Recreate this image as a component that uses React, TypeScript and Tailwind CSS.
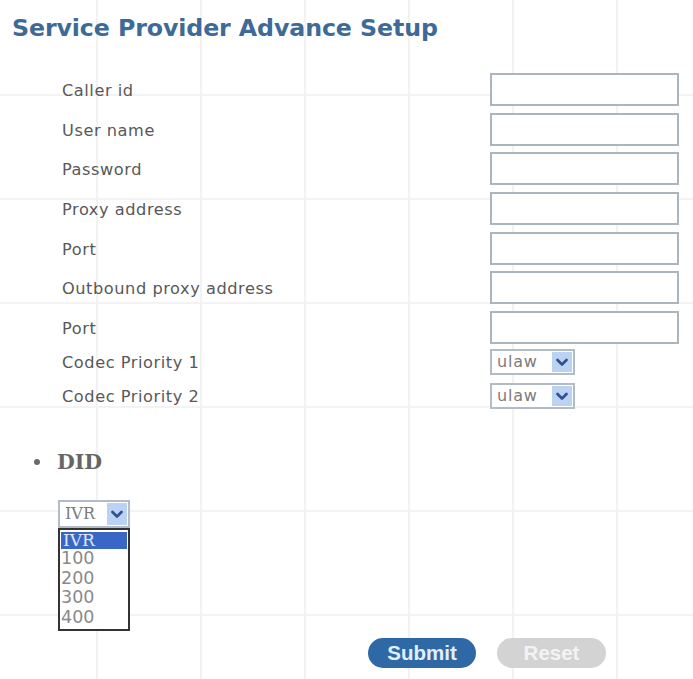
import React from "react";

const textRows = [
  "Caller id",
  "User name",
  "Password",
  "Proxy address",
  "Port",
  "Outbound proxy address",
  "Port",
];

const codecRows = ["Codec Priority 1", "Codec Priority 2"];

function Chevron() {
  return (
    <svg width="12" height="9" viewBox="0 0 12 9" aria-hidden="true">
      <path d="M1.5 2 L6 6.5 L10.5 2" fill="none" stroke="#2f4f8f" strokeWidth="2.6" strokeLinecap="round" strokeLinejoin="round" />
    </svg>
  );
}

function ComboBox({ value, className, textClass }: { value: string; className: string; textClass: string }) {
  return (
    <div className={`flex items-stretch border-2 border-[#b3bcc6] bg-white ${className}`}>
      <span className={`flex-1 flex items-center pl-[5px] text-[#7c7c7c] ${textClass}`}>{value}</span>
      <span className="w-[20px] my-[1px] mr-[1px] bg-[#bcd2f2] flex items-center justify-center">
        <Chevron />
      </span>
    </div>
  );
}

export default function App() {
  return (
    <div
      className="relative w-[693px] h-[679px] overflow-hidden bg-white bg-[linear-gradient(to_right,#f2f2f2_2px,transparent_2px),linear-gradient(to_bottom,#f3f3f3_2px,transparent_2px)] bg-[size:104px_104px] bg-[position:96px_94px]"
      style={{ fontFamily: '"DejaVu Sans", Verdana, sans-serif' }}
    >
      <h1 className="pl-[12px] pt-[13px] text-[23.7px] leading-[30px] font-bold text-[#3e6a98] tracking-[-0.1px]">
        Service Provider Advance Setup
      </h1>

      {/* text fields */}
      <div className="mt-[30px] flex flex-col gap-[6.7px]">
        {textRows.map((label, i) => (
          <div key={i} className="flex items-center h-[33px]">
            <span className="w-[490px] pl-[62px] pt-[3px] text-[16.2px] tracking-[0.55px] text-[#585858]">{label}</span>
            <div className="w-[189px] h-[33px] border-2 border-[#aab5c0] bg-white" />
          </div>
        ))}
      </div>

      {/* codec selects */}
      <div className="mt-[5px] flex flex-col gap-[8px]">
        {codecRows.map((label, i) => (
          <div key={i} className="flex items-center h-[26px]">
            <span className="w-[490px] pl-[62px] pt-[3px] text-[16.2px] tracking-[0.55px] text-[#585858]">{label}</span>
            <ComboBox value="ulaw" className="w-[85px] h-[26px]" textClass="text-[16px] tracking-[0.8px]" />
          </div>
        ))}
      </div>

      {/* DID section */}
      <div className="mt-[40px] flex items-center h-[26px] pl-[34px]">
        <span className="w-[6px] h-[6px] rounded-full bg-[#6a6a6a]" />
        <span
          className="ml-[17px] text-[20.5px] font-bold text-[#666666]"
          style={{ fontFamily: '"DejaVu Serif", Georgia, serif' }}
        >
          DID
        </span>
      </div>

      <div className="mt-[25px] pl-[58px]">
        <ComboBox
          value="IVR"
          className="w-[72px] h-[28px]"
          textClass="text-[16px] font-['DejaVu_Serif',serif]"
        />
        <div className="w-[72px] border-2 border-[#333333] bg-white flex flex-col pt-[2px] pb-[2px]">
          <span
            className="h-[17px] mx-[1px] bg-[#3a66c6] text-[#dfe8fb] text-[17px] leading-[17px] pl-[2px]"
            style={{ fontFamily: '"DejaVu Serif", Georgia, serif' }}
          >
            IVR
          </span>
          {["100", "200", "300", "400"].map((v) => (
            <span key={v} className="h-[19.5px] text-[17.5px] leading-[19.5px] pl-[1px] text-[#8a8a8a]">
              {v}
            </span>
          ))}
        </div>
      </div>

      {/* actions */}
      <div className="absolute left-[368px] top-[638px] flex gap-[21px]" style={{ fontFamily: '"Liberation Sans", Arial, sans-serif' }}>
        <button className="w-[108px] h-[30px] rounded-full bg-[#2e69a6] text-[#e3eefa] text-[20.5px] font-bold flex items-center justify-center">
          Submit
        </button>
        <button className="w-[109px] h-[30px] rounded-full bg-[#d3d3d3] text-[#f3f3f3] text-[20.5px] font-bold flex items-center justify-center">
          Reset
        </button>
      </div>
    </div>
  );
}
